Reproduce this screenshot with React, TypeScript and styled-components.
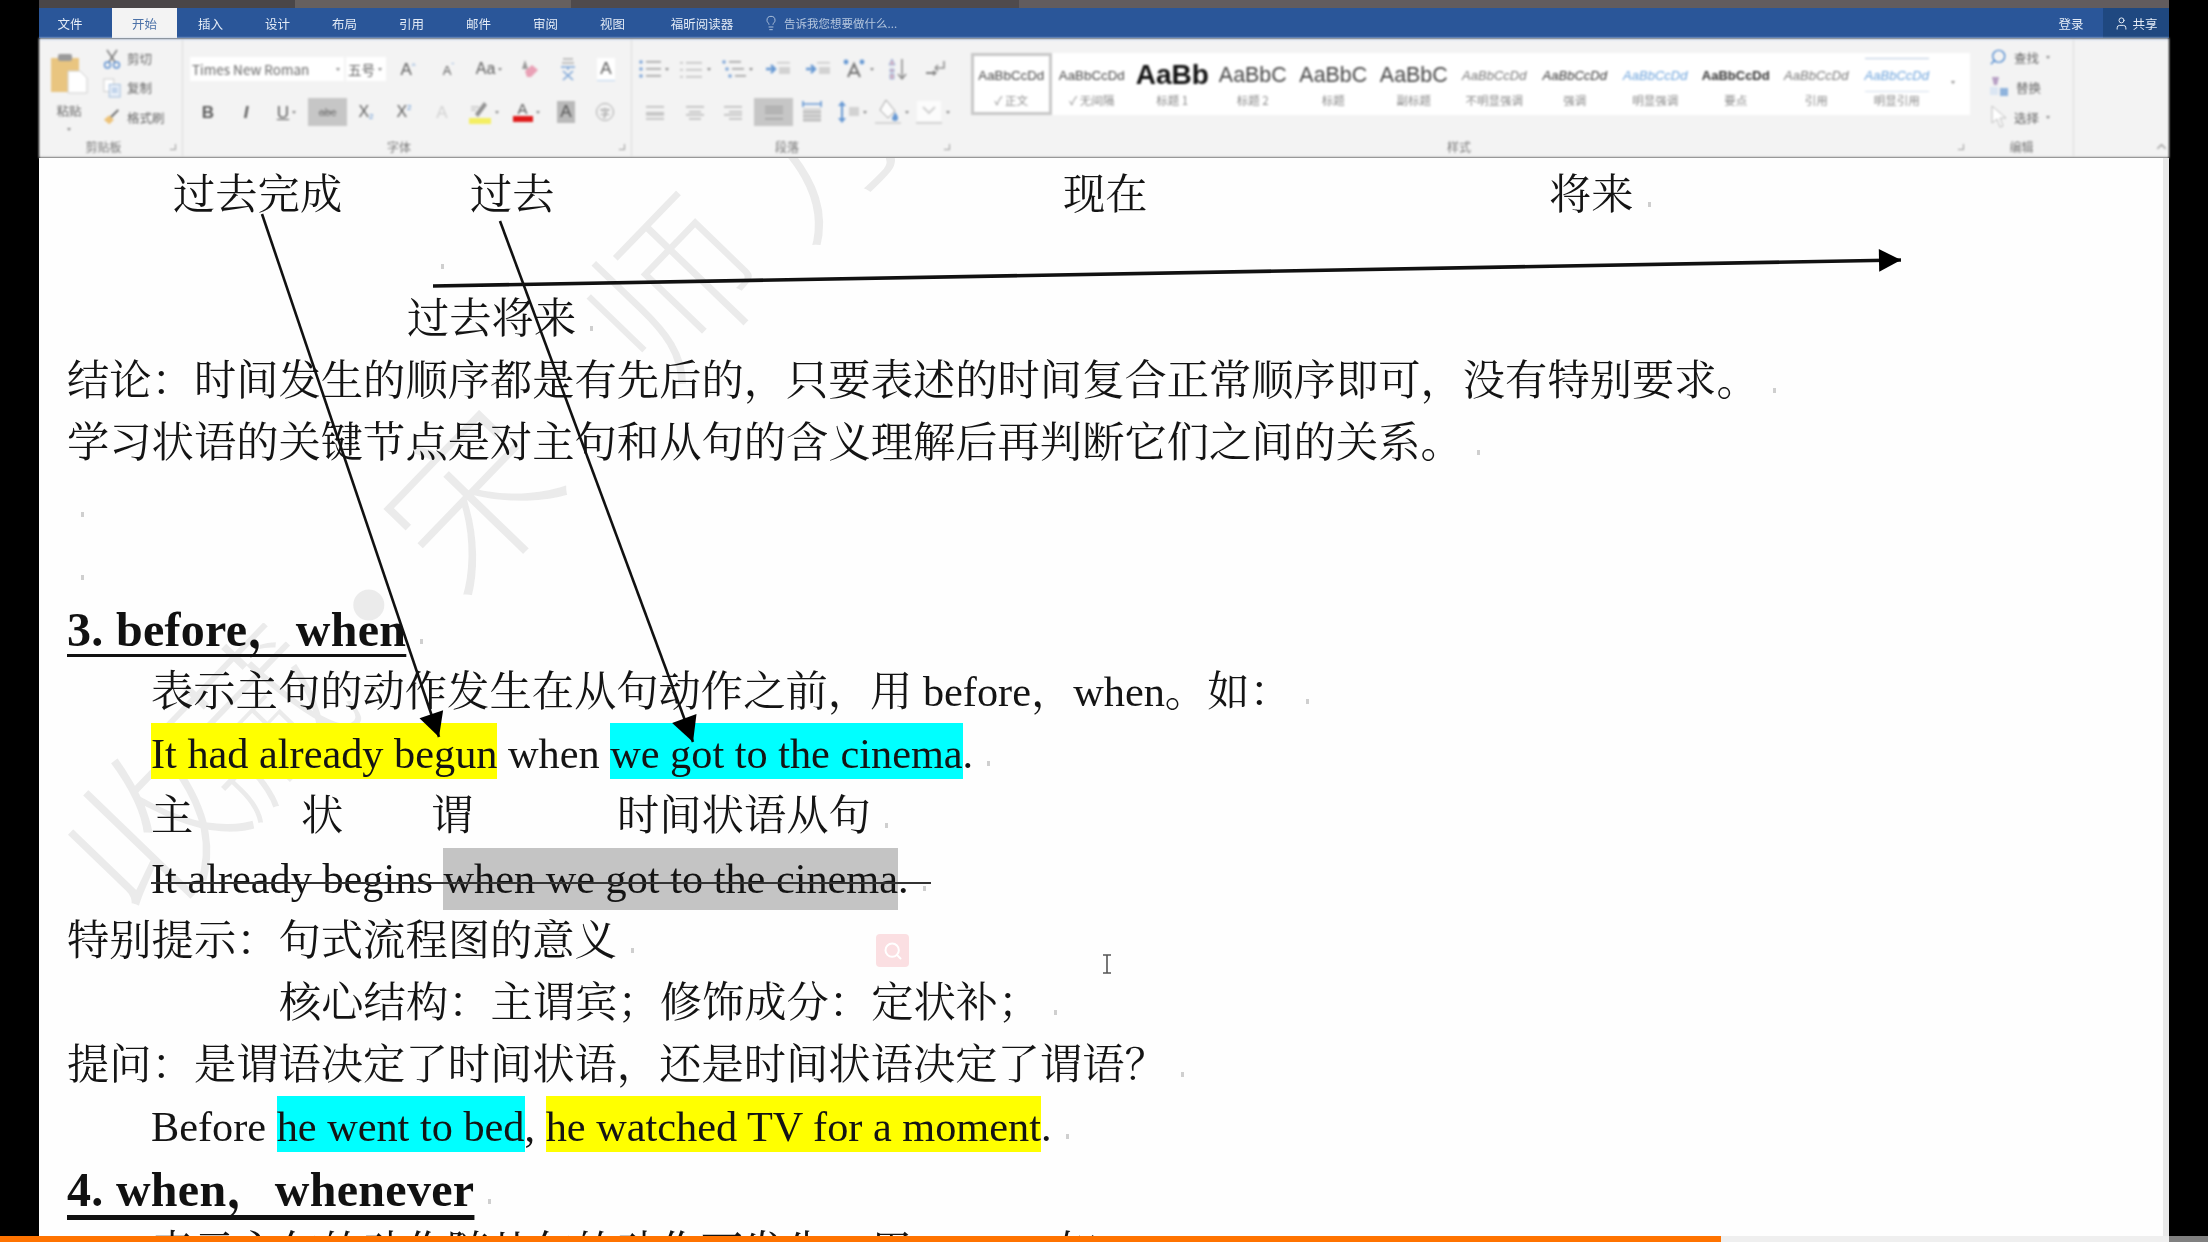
import React from 'react'
import styled, { createGlobalStyle } from 'styled-components'
import { ChevronUp, Lightbulb, Search, User } from 'lucide-react'

const UI_FONT = '"Noto Sans CJK SC", "Noto Sans", sans-serif'
const DOC_FONT = '"Liberation Serif", "Noto Serif CJK SC", "Noto Sans CJK SC", serif'

const GlobalStyle = createGlobalStyle`
  html, body {
    margin: 0;
    padding: 0;
    background: #000;
    overflow: hidden;
  }
`

const Frame = styled.div`
  position: relative;
  width: 2208px;
  height: 1242px;
  overflow: hidden;
  background: #000;
  padding: 0 39px;
  box-sizing: border-box;
  font-family: ${UI_FONT};
`

const Word = styled.div`
  width: 2130px;
  height: 1242px;
  display: flex;
  flex-direction: column;
`

const TopStrip = styled.div`
  height: 8px;
  flex: none;
  background: linear-gradient(90deg, #4a4648 0 12%, #66605f 12% 25%, #4f4a4c 25% 46%, #625c5e 46%);
`

const TabBar = styled.div`
  height: 30px;
  flex: none;
  display: flex;
  background: #2a5699;
  color: #e3ebf6;
  font-size: 12.5px;
  filter: blur(0.7px);
`

const Tab = styled.div<{ $w?: number; $active?: boolean }>`
  flex: 0 0 ${p => p.$w ?? 67}px;
  display: flex;
  align-items: center;
  justify-content: center;
  background: ${p => (p.$active ? '#f3f3f3' : 'transparent')};
  color: ${p => (p.$active ? '#4c72a8' : 'inherit')};
`

const TellMe = styled.div`
  margin-left: 5px;
  flex: 1;
  display: flex;
  align-items: center;
  gap: 5px;
  font-size: 11.5px;
  color: #b4c6de;
`

const SignIn = styled.div`
  flex: 0 0 64px;
  display: flex;
  align-items: center;
  justify-content: center;
`

const Share = styled.div`
  flex: 0 0 66px;
  display: flex;
  align-items: center;
  justify-content: center;
  gap: 3px;
  background: #1f4880;
`

const Ribbon = styled.div`
  height: 120px;
  flex: none;
  display: flex;
  box-sizing: border-box;
  background: #f3f3f3;
  border-top: 2px solid #cfdcee;
  border-bottom: 2px solid #e2e2e2;
  color: #6a6a6a;
  font-size: 12.5px;
  filter: blur(0.8px);
`

const Group = styled.div<{ $w?: number; $line?: boolean }>`
  position: relative;
  flex: ${p => (p.$w ? `0 0 ${p.$w}px` : '1')};
  display: flex;
  flex-direction: column;
  box-sizing: border-box;
  border-right: ${p => (p.$line ? '1px solid #dcdcdc' : '0')};
`

const GroupBody = styled.div`
  flex: 1;
  min-height: 0;
`

const GroupLabel = styled.div<{ $shift?: number }>`
  height: 24px;
  flex: none;
  box-sizing: border-box;
  padding: 5px ${p => p.$shift ?? 0}px 0 0;
  display: flex;
  align-items: center;
  justify-content: center;
  font-size: 12px;
  color: #777;
`

const Launcher = styled.span`
  position: absolute;
  right: 6px;
  bottom: 6px;
  width: 6px;
  height: 6px;
  box-sizing: border-box;
  border-right: 1px solid #9a9a9a;
  border-bottom: 1px solid #9a9a9a;
`

const ClipBody = styled(GroupBody)`
  display: flex;
`

const PasteColumn = styled.div`
  flex: 0 0 58px;
  padding: 13px 0 0 2px;
  box-sizing: border-box;
  display: flex;
  flex-direction: column;
  align-items: center;
  line-height: 1;
  color: #666;
  gap: 10px;
`

const ClipColumn = styled.div`
  padding: 4px 0 0 6px;
  display: flex;
  flex-direction: column;
`

const ClipRow = styled.div`
  height: 31px;
  display: flex;
  align-items: center;
  gap: 6px;
  color: #666;
`

const IconStack = styled(GroupBody)`
  padding-top: 16px;
  display: flex;
  flex-direction: column;
  gap: 17px;
`

const IconRow = styled.div<{ $pad?: number }>`
  height: 26px;
  display: flex;
  align-items: center;
  padding-left: ${p => p.$pad ?? 0}px;
`

const Cell = styled.div<{ $w: number; $on?: boolean }>`
  flex: 0 0 ${p => p.$w}px;
  height: 28px;
  display: flex;
  align-items: center;
  justify-content: center;
  gap: 3px;
  background: ${p => (p.$on ? '#c6c6c6' : 'transparent')};
  color: #666;

  svg {
    opacity: 0.78;
  }
`

const Caret = styled.span`
  width: 0;
  height: 0;
  border-left: 2px solid transparent;
  border-right: 2px solid transparent;
  border-top: 3px solid #8a8a8a;
`

const FieldBox = styled.div<{ $w: number }>`
  flex: 0 0 ${p => p.$w}px;
  height: 24px;
  box-sizing: border-box;
  margin-right: 2px;
  padding: 0 4px 0 2px;
  display: flex;
  align-items: center;
  justify-content: space-between;
  background: #fff;
  font-size: 13.5px;
  color: #666;
`

const FontLetter = styled.span<{ $size?: number; $weight?: number; $italic?: boolean; $color?: string }>`
  font-family: "Liberation Sans", sans-serif;
  font-size: ${p => p.$size ?? 15}px;
  font-weight: ${p => p.$weight ?? 400};
  font-style: ${p => (p.$italic ? 'italic' : 'normal')};
  color: ${p => p.$color ?? '#5c5c5c'};
  line-height: 1;
`

const Tiny = styled.sub`
  font-size: 8px;
  color: #5b8fd0;
  vertical-align: -2px;
`

const TinyUp = styled.sup`
  font-size: 8px;
  color: #5b8fd0;
  vertical-align: 7px;
`

const ColorLetter = styled.span<{ $bar: string }>`
  display: inline-flex;
  flex-direction: column;
  align-items: center;
  font-family: "Liberation Sans", sans-serif;
  font-size: 15px;
  line-height: 14px;
  color: #5c5c5c;

  &::after {
    content: '';
    width: 20px;
    height: 6px;
    background: ${p => p.$bar};
  }
`

const BoxLetter = styled.span<{ $dark?: boolean }>`
  width: 18px;
  height: 22px;
  display: inline-flex;
  align-items: center;
  justify-content: center;
  font-family: "Liberation Sans", sans-serif;
  font-size: 17px;
  color: #555;
  background: ${p => (p.$dark ? '#b9b9b9' : '#fff')};
  box-shadow: ${p => (p.$dark ? 'none' : '0 1px 0 #bcd4ee')};
`

const RoundLetter = styled.span`
  width: 18px;
  height: 18px;
  box-sizing: border-box;
  border: 1px solid #aaa;
  border-radius: 50%;
  display: inline-flex;
  align-items: center;
  justify-content: center;
  font-size: 10px;
  color: #888;
`

const GalleryBody = styled(GroupBody)`
  padding: 13px 0 0 15px;
`

const Gallery = styled.div`
  width: 999px;
  height: 62px;
  display: flex;
  background: #fff;
`

const StyleItem = styled.div<{ $current?: boolean }>`
  flex: 0 0 80.5px;
  box-sizing: border-box;
  border: ${p => (p.$current ? '3px solid #c8c8c8' : '3px solid transparent')};
  display: flex;
  flex-direction: column;
  align-items: center;
`

const StyleSample = styled.div<{ $size: number; $weight?: number; $italic?: boolean; $color?: string; $rule?: boolean }>`
  height: 34px;
  margin-top: 2px;
  box-sizing: border-box;
  display: flex;
  align-items: center;
  white-space: nowrap;
  font-family: "Liberation Sans", sans-serif;
  font-size: ${p => p.$size}px;
  font-weight: ${p => p.$weight ?? 400};
  font-style: ${p => (p.$italic ? 'italic' : 'normal')};
  color: ${p => p.$color ?? '#444'};
  border-top: ${p => (p.$rule ? '1px solid #b8c9de' : '0')};
  border-bottom: ${p => (p.$rule ? '1px solid #d5dfec' : '0')};
`

const StyleName = styled.div`
  font-size: 11.5px;
  line-height: 16px;
  color: #8a8a8a;
  white-space: nowrap;
`

const GalleryMore = styled.div`
  flex: 1;
  display: flex;
  align-items: center;
  justify-content: center;
  padding-right: 2px;
  padding-bottom: 4px;
`

const EditBody = styled(GroupBody)`
  padding: 2px 0 0 19px;
`

const EditRow = styled.div`
  height: 30px;
  display: flex;
  align-items: center;
  gap: 7px;
  color: #666;
`

const Tail = styled.div`
  flex: 1;
  position: relative;
  color: #8b8b8b;

  svg {
    position: absolute;
    right: 0;
    bottom: 2px;
  }
`

const Doc = styled.div`
  position: relative;
  flex: 1;
  min-height: 0;
  overflow: hidden;
  box-sizing: border-box;
  background: #fefefe;
  border-right: 6px solid #e9e9e9;
  padding: 5.5px 0 0 28px;
  font-family: ${DOC_FONT};
  font-size: 42.3px;
  line-height: 62.2px;
  color: #141414;
  filter: blur(0.55px);
`

const Watermark = styled.div`
  position: absolute;
  left: 24px;
  top: 577px;
  height: 170px;
  display: flex;
  transform: rotate(-46deg);
  transform-origin: 85px 85px;
  font-family: ${UI_FONT};
  font-size: 170px;
  line-height: 170px;
  color: #ebebeb;
  -webkit-text-stroke: 5px #fefefe;
  white-space: nowrap;
`

const WatermarkGlyph = styled.span<{ $w: number }>`
  flex: 0 0 ${p => p.$w}px;
  min-width: 0;
  display: flex;
  justify-content: center;
`

const Line = styled.div<{ $indent?: number }>`
  position: relative;
  height: 62.2px;
  padding-left: ${p => p.$indent ?? 0}px;
  white-space: nowrap;
`

const Columns = styled.div<{ $indent: number; $cols: string }>`
  position: relative;
  height: 62.2px;
  padding-left: ${p => p.$indent}px;
  display: grid;
  grid-template-columns: ${p => p.$cols};
  white-space: nowrap;
`

const Heading = styled.div<{ $heavy?: boolean }>`
  position: relative;
  height: 62.2px;
  font-size: 48px;
  font-weight: 700;
  letter-spacing: 0.3px;
  white-space: nowrap;
  color: #111;

  u {
    text-decoration: underline;
    text-decoration-thickness: ${p => (p.$heavy ? 5 : 3)}px;
    text-underline-offset: ${p => (p.$heavy ? 9 : 8)}px;
    text-decoration-skip-ink: none;
  }
`

const Mark = styled.span<{ $bg: string; $h?: number }>`
  display: inline-block;
  height: ${p => p.$h ?? 56}px;
  vertical-align: top;
  background: ${p => p.$bg};
`

const Struck = styled(Line)`
  &::after {
    content: '';
    position: absolute;
    left: 84px;
    top: 34px;
    width: 780px;
    height: 2px;
    background: #333;
  }
`

const ParaMark = styled.span`
  display: inline-block;
  width: 3px;
  height: 5px;
  margin-left: 14px;
  vertical-align: 2px;
  background: #cfcfcf;
`

const Arrows = styled.svg`
  position: absolute;
  left: 0;
  top: 0;
  pointer-events: none;
`

const SearchBadge = styled.div`
  position: absolute;
  left: 837px;
  top: 776px;
  width: 33px;
  height: 33px;
  border-radius: 4px;
  background: #fbdfe2;
  color: #fff;
  display: flex;
  align-items: center;
  justify-content: center;
`

const TextCursor = styled.svg`
  position: absolute;
  left: 1062px;
  top: 796px;
`

const Progress = styled.div`
  position: absolute;
  left: 0;
  right: 0;
  bottom: 0;
  height: 6px;
  display: flex;
  background: #efefef;
`

const ProgressFill = styled.div`
  flex: 0 0 1721px;
  background: #ff7300;
`

const ProgressEnd = styled.div`
  margin-left: auto;
  flex: 0 0 39px;
  background: #808080;
`

/* ribbon drawings */

const Rows = ({ rows, color = '#8d8d8d', w = 22 }: { rows: number[][]; color?: string; w?: number }) => (
  <svg width={w} height="18" viewBox={`0 0 ${w} 18`}>
    {rows.map(([a, b, y], i) => (
      <rect key={i} x={a} y={y} width={b - a} height="1.6" fill={color} />
    ))}
  </svg>
)

const Bullets = ({ nested }: { nested?: boolean }) => (
  <svg width="24" height="20" viewBox="0 0 24 20">
    {[3, 10, 17].map((y, i) => (
      <g key={y}>
        <circle cx={nested ? 2 + i * 3 : 3} cy={y} r="1.8" fill="#5b8fd0" />
        <rect x={nested ? 7 + i * 3 : 8} y={y - 1} width={nested ? 12 : 15} height="1.6" fill="#8d8d8d" />
      </g>
    ))}
  </svg>
)

const Indent = () => (
  <svg width="26" height="18" viewBox="0 0 26 18">
    <path d="M1 9h8M6 5l4 4-4 4" stroke="#3f7fcb" strokeWidth="2.4" fill="none" />
    <rect x="12" y="2" width="13" height="1.5" fill="#bdbdbd" />
    <rect x="14" y="7" width="11" height="7" fill="#c9c9c9" />
  </svg>
)

const Paste = () => (
  <svg width="38" height="42" viewBox="0 0 38 42">
    <rect x="1" y="5" width="28" height="34" fill="#e9c580" />
    <rect x="8" y="1" width="14" height="7" rx="2" fill="#9a9a9a" />
    <path d="M18 18h12l7 7v15H18z" fill="#fff" stroke="#cfcfcf" />
  </svg>
)

const Scissors = () => (
  <svg width="18" height="20" viewBox="0 0 18 20">
    <path d="M4 1l8 12M14 1L6 13" stroke="#777" strokeWidth="1.4" fill="none" />
    <circle cx="4.5" cy="16" r="3" stroke="#5b8fd0" strokeWidth="1.4" fill="none" />
    <circle cx="13.5" cy="16" r="3" stroke="#5b8fd0" strokeWidth="1.4" fill="none" />
  </svg>
)

const CopyDoc = () => (
  <svg width="18" height="22" viewBox="0 0 20 22">
    <rect x="1" y="1" width="11" height="14" fill="#fff" stroke="#c9c9c9" />
    <rect x="7" y="7" width="12" height="14" fill="#e6eef8" stroke="#9db8d8" />
    <path d="M10 12h6M10 15h6" stroke="#7ba3d2" />
  </svg>
)

const Brush = () => (
  <svg width="18" height="18" viewBox="0 0 20 18">
    <path d="M1 12l6-5 5 5-5 5z" fill="#edc277" />
    <path d="M9 9l8-8" stroke="#666" strokeWidth="2" />
  </svg>
)

const Eraser = () => (
  <svg width="20" height="20" viewBox="0 0 20 20">
    <path d="M6 1l3 9H3z" fill="#7f7f7f" />
    <path d="M6 12l7-6 6 5-7 7H8z" fill="#e78aa4" />
  </svg>
)

const Phonetic = () => (
  <svg width="18" height="24" viewBox="0 0 18 24">
    <path d="M4 2h10M3 6h12" stroke="#9a9a9a" strokeWidth="1.4" />
    <path d="M2 10h14M9 10v3M4 14l10 9M14 14L4 23" stroke="#5b8fd0" strokeWidth="1.6" fill="none" />
  </svg>
)

const Highlighter = () => (
  <svg width="24" height="26" viewBox="0 0 24 26">
    <path d="M7 15l9-12 3 3-9 12z" fill="#777" />
    <path d="M3 8h8M3 11h5" stroke="#999" />
    <rect x="1" y="19" width="22" height="6" fill="#f5ee3a" />
  </svg>
)

const TextDir = () => (
  <svg width="26" height="20" viewBox="0 0 26 20">
    <path d="M7 18L13 5l6 13M9 14h8" stroke="#555" strokeWidth="2" fill="none" />
    <circle cx="5" cy="3" r="2.4" fill="#3f7fcb" />
    <circle cx="21" cy="3" r="2.4" fill="#3f7fcb" />
  </svg>
)

const Sort = () => (
  <svg width="22" height="24" viewBox="0 0 22 24">
    <path d="M5 2l3 6H2zM3 12h4v3H3zM3 17h4v5H3z" fill="#d7a1b2" stroke="#5b8fd0" strokeWidth=".7" />
    <path d="M15 2v19M11 17l4 5 4-5" stroke="#666" strokeWidth="1.4" fill="none" />
  </svg>
)

const Marks = () => (
  <svg width="24" height="20" viewBox="0 0 24 20">
    <path d="M19 2v7h-9M10 9l3-3M10 9l3 3" stroke="#777" strokeWidth="1.6" fill="none" />
    <path d="M1 14h8" stroke="#666" strokeWidth="2" />
    <path d="M12 14l-4-3v6z" fill="#666" />
  </svg>
)

const Distributed = () => (
  <svg width="22" height="24" viewBox="0 0 22 24">
    <path d="M2 1v6M20 1v6M2 4h18" stroke="#3f7fcb" strokeWidth="1.6" />
    <rect x="2" y="8" width="18" height="14" fill="#d4d4d4" />
    <path d="M2 12h18M2 16h18M2 20h18" stroke="#8d8d8d" />
  </svg>
)

const LineSpacing = () => (
  <svg width="24" height="26" viewBox="0 0 24 26">
    <path d="M6 3v20" stroke="#3f7fcb" strokeWidth="2" />
    <path d="M2 7l4-5 4 5zM2 19l4 5 4-5z" fill="#3f7fcb" />
    <rect x="13" y="8" width="10" height="9" fill="#c9c9c9" />
  </svg>
)

const Bucket = () => (
  <svg width="28" height="28" viewBox="0 0 28 28">
    <path d="M12 2l9 11-7 7-8-8z" fill="#fff" stroke="#888" />
    <path d="M21 14c2 3 3 4 3 6a3 3 0 0 1-6 0z" fill="#3f7fcb" />
    <path d="M1 25h26" stroke="#c2c2c2" strokeWidth="1.6" />
  </svg>
)

const Borders = () => (
  <svg width="28" height="26" viewBox="0 0 28 26">
    <rect x="2" y="2" width="24" height="20" fill="#fff" />
    <path d="M8 8l6 6 6-6" stroke="#c8c8c8" strokeWidth="2" fill="none" />
    <path d="M1 24h26" stroke="#c2c2c2" strokeWidth="1.6" />
  </svg>
)

const Replace = () => (
  <svg width="20" height="22" viewBox="0 0 20 22">
    <path d="M3 1h7l-2 8H5z" fill="#b79fc4" />
    <rect x="1" y="11" width="8" height="8" fill="#dbe6f3" />
    <rect x="11" y="12" width="8" height="8" fill="#8fb3dc" />
  </svg>
)

const Pointer = () => (
  <svg width="18" height="24" viewBox="0 0 18 24">
    <path d="M3 1v17l5-4 3 8 3-1-3-8h6z" fill="#fff" stroke="#bdbdbd" />
  </svg>
)

const GALLERY = [
  { sample: 'AaBbCcDd', name: '✓ 正文', size: 13.3, current: true },
  { sample: 'AaBbCcDd', name: '✓ 无间隔', size: 13.3 },
  { sample: 'AaBb', name: '标题 1', size: 28, weight: 700, color: '#111' },
  { sample: 'AaBbC', name: '标题 2', size: 21.4 },
  { sample: 'AaBbC', name: '标题', size: 21.4 },
  { sample: 'AaBbC', name: '副标题', size: 21.4 },
  { sample: 'AaBbCcDd', name: '不明显强调', size: 13, italic: true, color: '#777' },
  { sample: 'AaBbCcDd', name: '强调', size: 13, italic: true, color: '#333' },
  { sample: 'AaBbCcDd', name: '明显强调', size: 13, italic: true, color: '#6ea4dc' },
  { sample: 'AaBbCcDd', name: '要点', size: 13, weight: 700, color: '#333' },
  { sample: 'AaBbCcDd', name: '引用', size: 13, italic: true, color: '#777' },
  { sample: 'AaBbCcDd', name: '明显引用', size: 13, italic: true, color: '#6ea4dc', rule: true },
]

const TABS = ['插入', '设计', '布局', '引用', '邮件', '审阅', '视图']

const TitleBar = () => (
  <>
    <TopStrip />
    <TabBar>
      <Tab $w={62}>文件</Tab>
      <Tab $w={11} />
      <Tab $w={65} $active>
        开始
      </Tab>
      {TABS.map(t => (
        <Tab key={t}>{t}</Tab>
      ))}
      <Tab $w={112}>福昕阅读器</Tab>
      <TellMe>
        <Lightbulb size={16} strokeWidth={1.4} />
        告诉我您想要做什么...
      </TellMe>
      <SignIn>登录</SignIn>
      <Share>
        <User size={15} strokeWidth={1.6} />
        共享
      </Share>
    </TabBar>
  </>
)

const RibbonBar = () => (
  <Ribbon>
    <Group $w={144} $line>
      <ClipBody>
        <PasteColumn>
          <Paste />
          粘贴
          <Caret />
        </PasteColumn>
        <ClipColumn>
          <ClipRow>
            <Scissors />
            剪切
          </ClipRow>
          <ClipRow>
            <CopyDoc />
            复制
          </ClipRow>
          <ClipRow>
            <Brush />
            格式刷
          </ClipRow>
        </ClipColumn>
      </ClipBody>
      <GroupLabel $shift={14}>剪贴板</GroupLabel>
      <Launcher />
    </Group>

    <Group $w={449} $line>
      <IconStack>
        <IconRow $pad={7}>
          <FieldBox $w={154}>
            <span>Times New Roman</span>
            <Caret />
          </FieldBox>
          <FieldBox $w={40}>
            五号
            <Caret />
          </FieldBox>
          <Cell $w={40}>
            <FontLetter $size={17}>
              A<TinyUp>^</TinyUp>
            </FontLetter>
          </Cell>
          <Cell $w={41}>
            <FontLetter $size={13}>
              A<TinyUp>ˇ</TinyUp>
            </FontLetter>
          </Cell>
          <Cell $w={40}>
            <FontLetter $size={16}>Aa</FontLetter>
            <Caret />
          </Cell>
          <Cell $w={40}>
            <Eraser />
          </Cell>
          <Cell $w={37}>
            <Phonetic />
          </Cell>
          <Cell $w={40}>
            <BoxLetter>A</BoxLetter>
          </Cell>
        </IconRow>
        <IconRow $pad={6}>
          <Cell $w={38}>
            <FontLetter $size={17} $weight={700}>
              B
            </FontLetter>
          </Cell>
          <Cell $w={38}>
            <FontLetter $size={17} $italic $weight={700}>
              I
            </FontLetter>
          </Cell>
          <Cell $w={43}>
            <FontLetter $size={17}>
              <u>U</u>
            </FontLetter>
            <Caret />
          </Cell>
          <Cell $w={39} $on>
            <FontLetter $size={11} $color="#777">
              <s>abc</s>
            </FontLetter>
          </Cell>
          <Cell $w={38}>
            <FontLetter $size={16}>
              X<Tiny>2</Tiny>
            </FontLetter>
          </Cell>
          <Cell $w={38}>
            <FontLetter $size={16}>
              X<TinyUp>2</TinyUp>
            </FontLetter>
          </Cell>
          <Cell $w={38}>
            <FontLetter $size={17} $color="#d2d2d2">
              A
            </FontLetter>
          </Cell>
          <Cell $w={44}>
            <Highlighter />
            <Caret />
          </Cell>
          <Cell $w={42}>
            <ColorLetter $bar="#e01b1b">A</ColorLetter>
            <Caret />
          </Cell>
          <Cell $w={38}>
            <BoxLetter $dark>A</BoxLetter>
          </Cell>
          <Cell $w={40}>
            <RoundLetter>字</RoundLetter>
          </Cell>
        </IconRow>
      </IconStack>
      <GroupLabel $shift={16}>字体</GroupLabel>
      <Launcher />
    </Group>

    <Group $w={321}>
      <IconStack>
        <IconRow>
          <Cell $w={42}>
            <Bullets />
            <Caret />
          </Cell>
          <Cell $w={42}>
            <Rows
              w={24}
              rows={[
                [0, 3, 2],
                [6, 22, 2],
                [0, 3, 9],
                [6, 22, 9],
                [0, 3, 16],
                [6, 22, 16],
              ]}
              color="#b5b5b5"
            />
            <Caret />
          </Cell>
          <Cell $w={43}>
            <Bullets nested />
            <Caret />
          </Cell>
          <Cell $w={38}>
            <Indent />
          </Cell>
          <Cell $w={41}>
            <Indent />
          </Cell>
          <Cell $w={39}>
            <TextDir />
            <Caret />
          </Cell>
          <Cell $w={41}>
            <Sort />
          </Cell>
          <Cell $w={38}>
            <Marks />
          </Cell>
        </IconRow>
        <IconRow>
          <Cell $w={46}>
            <Rows
              rows={[
                [2, 20, 3],
                [2, 20, 9],
                [2, 20, 11],
                [2, 20, 15],
              ]}
              color="#adadad"
            />
          </Cell>
          <Cell $w={34}>
            <Rows
              rows={[
                [2, 20, 3],
                [5, 17, 8],
                [2, 20, 11],
                [5, 17, 15],
              ]}
              color="#adadad"
            />
          </Cell>
          <Cell $w={42}>
            <Rows
              rows={[
                [2, 20, 3],
                [7, 20, 8],
                [2, 20, 11],
                [7, 20, 15],
              ]}
              color="#adadad"
            />
          </Cell>
          <Cell $w={39} $on>
            <Rows
              rows={[
                [2, 20, 3],
                [2, 20, 6],
                [2, 20, 9],
                [2, 20, 15],
              ]}
              color="#9c9c9c"
            />
          </Cell>
          <Cell $w={38}>
            <Distributed />
          </Cell>
          <Cell $w={41}>
            <LineSpacing />
            <Caret />
          </Cell>
          <Cell $w={38}>
            <Bucket />
            <Caret />
          </Cell>
          <Cell $w={44}>
            <Borders />
            <Caret />
          </Cell>
        </IconRow>
      </IconStack>
      <GroupLabel $shift={14}>段落</GroupLabel>
      <Launcher />
    </Group>

    <Group $w={1014}>
      <GalleryBody>
        <Gallery>
          {GALLERY.map(item => (
            <StyleItem key={item.name} $current={item.current}>
              <StyleSample
                $size={item.size}
                $weight={item.weight}
                $italic={item.italic}
                $color={item.color}
                $rule={item.rule}
              >
                {item.sample}
              </StyleSample>
              <StyleName>{item.name}</StyleName>
            </StyleItem>
          ))}
          <GalleryMore>
            <Caret />
          </GalleryMore>
        </Gallery>
      </GalleryBody>
      <GroupLabel $shift={8}>样式</GroupLabel>
      <Launcher />
    </Group>

    <Group $w={104} $line>
      <EditBody>
        <EditRow>
          <Search size={18} strokeWidth={1.6} color="#3f7fcb" style={{ transform: 'scaleX(-1)' }} />
          查找
          <Caret />
        </EditRow>
        <EditRow>
          <Replace />
          替换
        </EditRow>
        <EditRow>
          <Pointer />
          选择
          <Caret />
        </EditRow>
      </EditBody>
      <GroupLabel>编辑</GroupLabel>
    </Group>

    <Tail>
      <ChevronUp size={15} />
    </Tail>
  </Ribbon>
)

const WATERMARK: [string, number][] = [
  ['收', 170],
  ['藏', 130],
  ['·', 186],
  ['宋', 110],
  ['', 145],
  ['师', 180],
  ['万', 228],
]

const Arrow = ({ x1, y1, x2, y2, base, width }: Record<'x1' | 'y1' | 'x2' | 'y2' | 'base' | 'width', number>) => {
  const angle = (Math.atan2(y2 - y1, x2 - x1) * 180) / Math.PI
  return (
    <g>
      <line x1={x1} y1={y1} x2={x2} y2={y2} stroke="#111" strokeWidth={width} />
      <path d={`M0 0L${-base} ${base * 0.52}L${-base} ${-base * 0.52}Z`} fill="#000" transform={`translate(${x2} ${y2}) rotate(${angle})`} />
    </g>
  )
}

export default function App() {
  return (
    <>
      <GlobalStyle />
      <Frame>
        <Word>
          <TitleBar />
          <RibbonBar />
          <Doc>
            <Watermark>
              {WATERMARK.map(([glyph, w], i) => (
                <WatermarkGlyph key={i} $w={w}>
                  {glyph}
                </WatermarkGlyph>
              ))}
            </Watermark>

            <Columns $indent={106} $cols="297px 593px 486px auto">
              <span>过去完成</span>
              <span>过去</span>
              <span>现在</span>
              <span>
                将来
                <ParaMark />
              </span>
            </Columns>
            <Line $indent={360}>
              <ParaMark />
            </Line>
            <Line $indent={340}>
              过去将来
              <ParaMark />
            </Line>
            <Line>
              结论：时间发生的顺序都是有先后的，只要表述的时间复合正常顺序即可，没有特别要求。
              <ParaMark />
            </Line>
            <Line>
              学习状语的关键节点是对主句和从句的含义理解后再判断它们之间的关系。
              <ParaMark />
            </Line>
            <Line>
              <ParaMark />
            </Line>
            <Line>
              <ParaMark />
            </Line>
            <Heading>
              <u>3. before，when</u>
              <ParaMark />
            </Heading>
            <Line $indent={84}>
              表示主句的动作发生在从句动作之前，用 before，when。如：
              <ParaMark />
            </Line>
            <Line $indent={84}>
              <Mark $bg="#ffff00">It had already begun</Mark> when <Mark $bg="#00ffff">we got to the cinema</Mark>.
              <ParaMark />
            </Line>
            <Columns $indent={84} $cols="150px 130px 186px auto">
              <span>主</span>
              <span>状</span>
              <span>谓</span>
              <span>
                时间状语从句
                <ParaMark />
              </span>
            </Columns>
            <Struck $indent={84}>
              It already begins{' '}
              <Mark $bg="#c4c4c4" $h={62}>
                when we got to the cinema
              </Mark>
              .
              <ParaMark />
            </Struck>
            <Line>
              特别提示：句式流程图的意义
              <ParaMark />
            </Line>
            <Line $indent={212}>
              核心结构：主谓宾；修饰成分：定状补；
              <ParaMark />
            </Line>
            <Line>
              提问：是谓语决定了时间状语，还是时间状语决定了谓语？
              <ParaMark />
            </Line>
            <Line $indent={84}>
              Before <Mark $bg="#00ffff">he went to bed</Mark>, <Mark $bg="#ffff00">he watched TV for a moment</Mark>.
              <ParaMark />
            </Line>
            <Heading $heavy>
              <u>4. when，whenever</u>
              <ParaMark />
            </Heading>
            <Line $indent={84}>表示主句的动作随从句的动作而发生，用 when。如：</Line>

            <Arrows width="2130" height="1084" viewBox="39 158 2130 1084">
              <Arrow x1={262} y1={214} x2={439} y2={737} base={24} width={2.6} />
              <Arrow x1={500} y1={221} x2={693} y2={742} base={25} width={2.6} />
              <Arrow x1={433} y1={286} x2={1901} y2={260} base={22} width={3.6} />
            </Arrows>

            <SearchBadge>
              <Search size={20} strokeWidth={2.4} />
            </SearchBadge>
            <TextCursor width="12" height="20" viewBox="0 0 12 20">
              <path d="M2 1h8M2 19h8M6 1v18" stroke="#555" strokeWidth="1.6" fill="none" />
            </TextCursor>
          </Doc>
        </Word>
        <Progress>
          <ProgressFill />
          <ProgressEnd />
        </Progress>
      </Frame>
    </>
  )
}
